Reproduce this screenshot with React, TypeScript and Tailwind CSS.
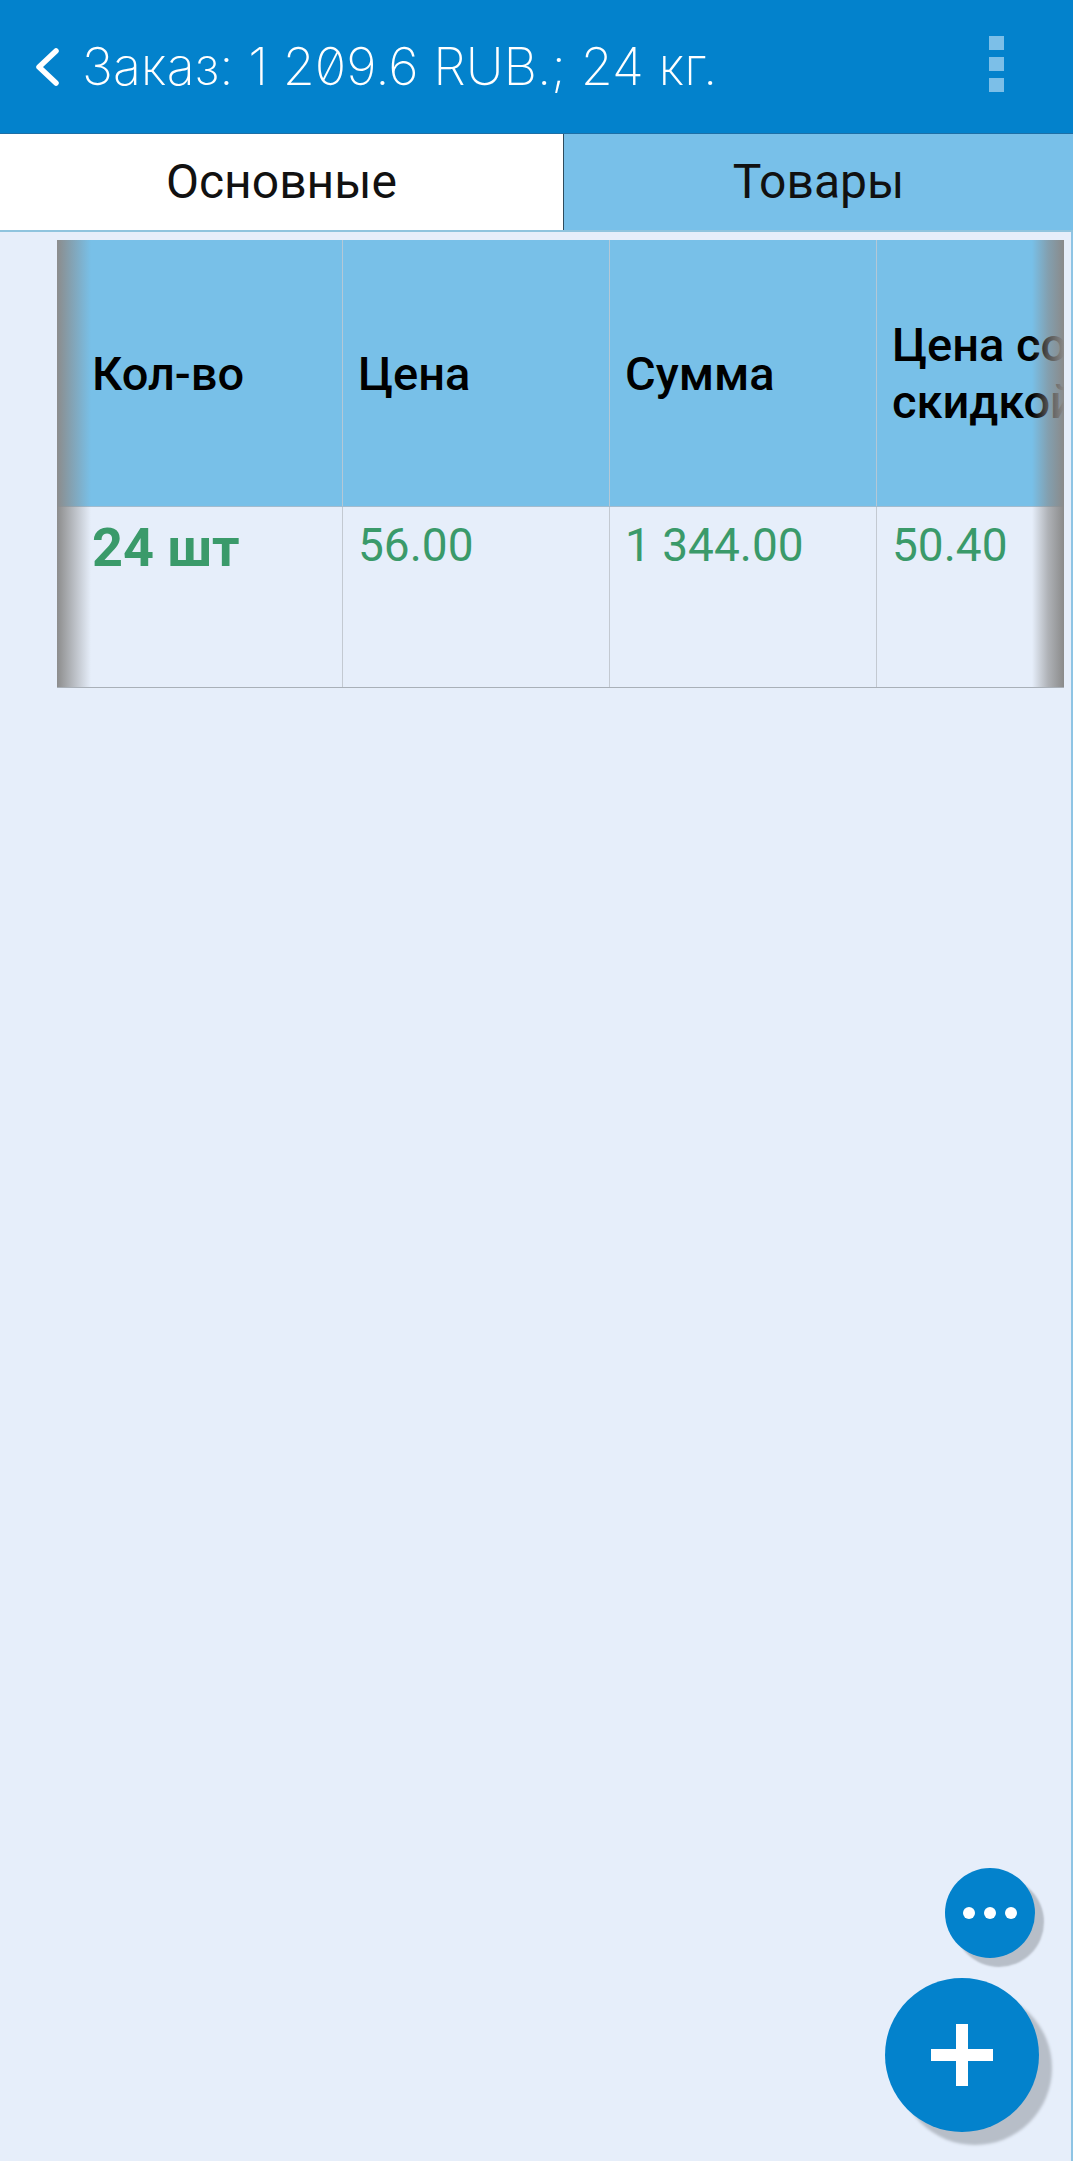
const COLUMNS = [
  { title: 'Кол-во', value: '24 шт', width: 'w-[286px] pl-[35px]', bold: true },
  { title: 'Цена', value: '56.00', width: 'w-[267px] pl-[15px]', bold: false },
  { title: 'Сумма', value: '1 344.00', width: 'w-[267px] pl-[15px]', bold: false },
  { title: 'Цена со скидкой', value: '50.40', width: 'w-[260px] pl-[15px]', bold: false },
];

const roboto = { fontFamily: 'Roboto, "Noto Sans", sans-serif' };

const Header = () => (
  <header className="flex h-[133px] items-center bg-[#0382cc] pl-[34px] pr-[69px]">
    <svg width="26" height="38" viewBox="0 0 26 38" className="mr-[22px] shrink-0">
      <path d="M22 3 L5 19 L22 35" fill="none" stroke="#ffffff" strokeWidth="5.5" strokeLinecap="round" strokeLinejoin="round" />
    </svg>
    <h1
      className="flex-1 text-[52px] font-extralight leading-none text-white slashed-zero"
      style={{ fontFamily: 'Inter, "Noto Sans", sans-serif', fontFeatureSettings: '"zero" 1' }}
    >
      Заказ: 1 209.6 RUB.; 24 кг.
    </h1>
    <div className="mb-[5px] flex flex-col gap-[7px]">
      <span className="h-[14px] w-[15px] bg-[#7cbfe8]" />
      <span className="h-[14px] w-[15px] bg-[#7cbfe8]" />
      <span className="h-[14px] w-[15px] bg-[#7cbfe8]" />
    </div>
  </header>
);

const Tabs = () => (
  <nav className="flex h-[99px] border-t border-[#1d6fa6] border-b-2 border-b-[#8fc4de]" style={roboto}>
    <div className="flex w-[564px] items-center justify-center border-r border-[#2f4b5c] bg-white text-[48px] text-[#111]">
      Основные
    </div>
    <div className="flex flex-1 items-center justify-center bg-[#78c0e9] text-[48px] text-[#111]">
      Товары
    </div>
  </nav>
);

const Table = () => (
  <div className="relative w-[1007px] overflow-hidden border-b border-[#a9b0b8]" style={roboto}>
    <div className="flex h-[267px] border-b border-[#a3bccf] bg-[#78c0e8]">
      {COLUMNS.map((col) => (
        <div
          key={col.title}
          className={`flex shrink-0 items-center border-r border-[#b4c8d6] pr-[10px] text-[47px] font-medium leading-[57px] text-black ${col.width}`}
        >
          <span className={col.title === 'Цена со скидкой' ? 'w-[300px] shrink-0' : ''}>{col.title}</span>
        </div>
      ))}
    </div>
    <div className="flex h-[180px] bg-[#e6eefa]">
      {COLUMNS.map((col) => (
        <div
          key={col.title}
          className={`shrink-0 border-r border-[#c3c9d1] leading-none text-[#3a9a6a] ${col.width} ${
            col.bold ? 'pt-[14px] text-[54px] font-bold' : 'pt-[15px] text-[46px]'
          }`}
        >
          {col.value}
        </div>
      ))}
    </div>
    {/* scroll shadows at both edges */}
    <div className="absolute inset-y-0 left-0 w-[34px] bg-gradient-to-r from-[#8c8c8c] via-[#8c8c8c]/50 to-transparent" />
    <div className="absolute inset-y-0 right-0 w-[32px] bg-gradient-to-l from-[#8a8a8a] via-[#8a8a8a]/60 to-transparent" />
  </div>
);

export default function App() {
  return (
    <div className="relative flex h-[2161px] w-[1073px] flex-col overflow-hidden bg-[#e6eefa]">
      <Header />
      <Tabs />
      <main className="flex-1 border-r-2 border-[#8ec4e4] pl-[57px] pt-[8px]">
        <Table />
      </main>

      <button className="absolute left-[945px] top-[1868px] flex h-[90px] w-[90px] items-center justify-center gap-[9px] rounded-full bg-[#0382cc] shadow-[9px_9px_2px_#b7bec8]">
        <span className="h-[12px] w-[12px] rounded-full bg-white" />
        <span className="h-[12px] w-[12px] rounded-full bg-white" />
        <span className="h-[12px] w-[12px] rounded-full bg-white" />
      </button>

      <button className="absolute left-[885px] top-[1978px] flex h-[154px] w-[154px] items-center justify-center rounded-full bg-[#0382cc] shadow-[13px_13px_3px_#b7bec8]">
        <svg width="62" height="62" viewBox="0 0 62 62">
          <rect x="25" y="0" width="12" height="62" fill="#ffffff" />
          <rect x="0" y="25" width="62" height="12" fill="#ffffff" />
        </svg>
      </button>
    </div>
  );
}
